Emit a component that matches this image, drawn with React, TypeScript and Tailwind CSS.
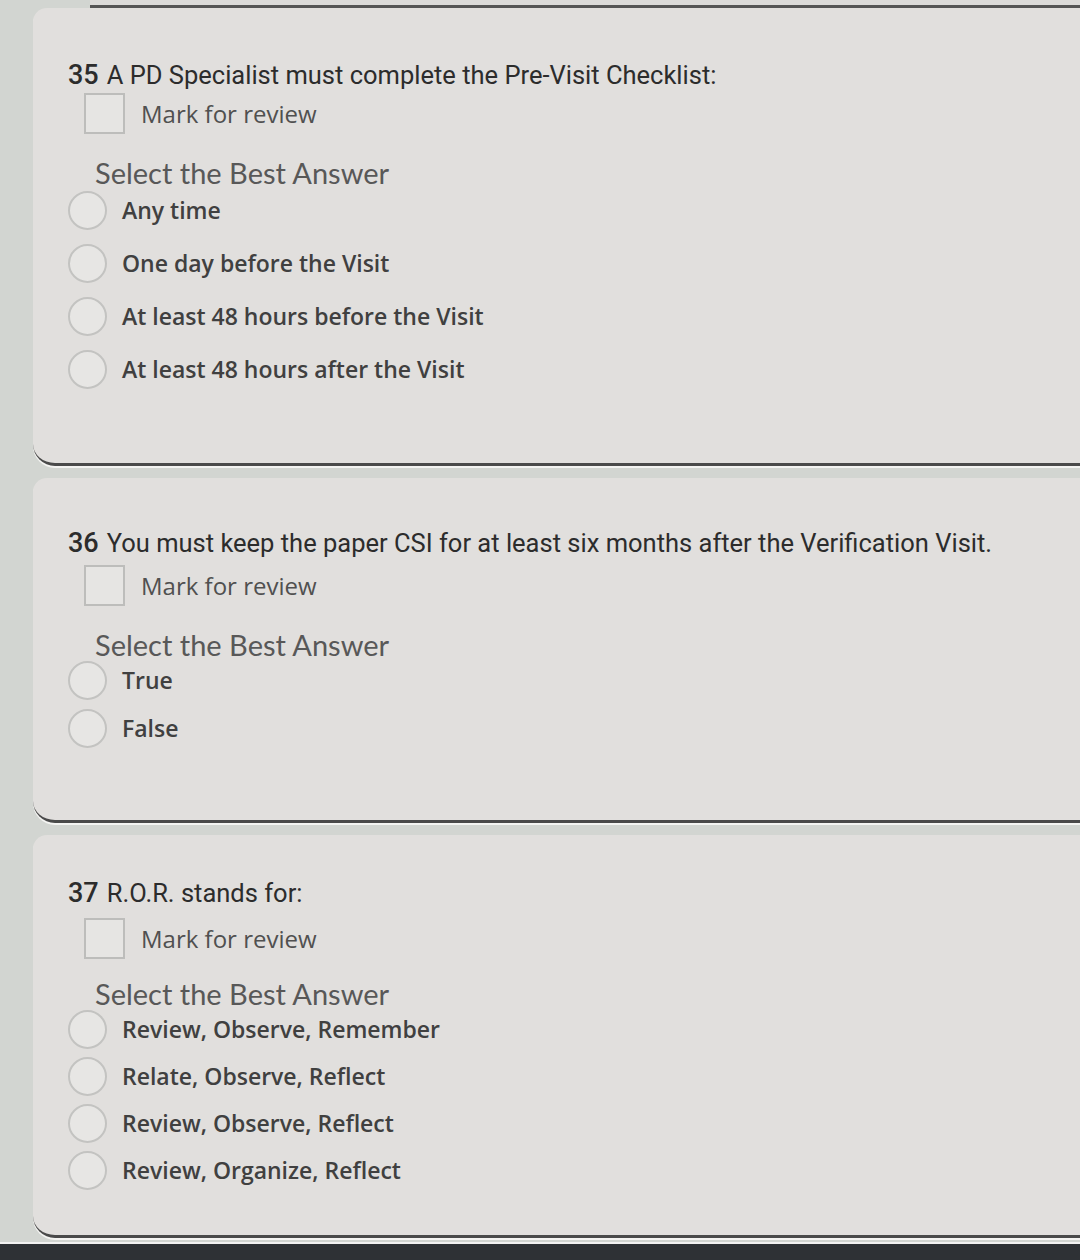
import React from "react";

type Q = {
  num: string;
  text: string;
  options: string[];
  pt: string;
  pb: string;
  cbMt: string;
  selMt: string;
  gap: string;
  optMt: string;
};

const questions: Q[] = [
  {
    num: "35",
    text: "A PD Specialist must complete the Pre-Visit Checklist:",
    options: [
      "Any time",
      "One day before the Visit",
      "At least 48 hours before the Visit",
      "At least 48 hours after the Visit",
    ],
    pt: "pt-[51px]",
    pb: "pb-[74px]",
    cbMt: "mt-[2px]",
    selMt: "mt-[24px]",
    gap: "gap-[13px]",
    optMt: "mt-[2px]",
  },
  {
    num: "36",
    text: "You must keep the paper CSI for at least six months after the Verification Visit.",
    options: ["True", "False"],
    pt: "pt-[49px]",
    pb: "pb-[72px]",
    cbMt: "mt-[6px]",
    selMt: "mt-[24px]",
    gap: "gap-[8px]",
    optMt: "mt-0",
  },
  {
    num: "37",
    text: "R.O.R. stands for:",
    options: [
      "Review, Observe, Remember",
      "Relate, Observe, Reflect",
      "Review, Observe, Reflect",
      "Review, Organize, Reflect",
    ],
    pt: "pt-[42px]",
    pb: "pb-[45px]",
    cbMt: "mt-[9px]",
    selMt: "mt-[20px]",
    gap: "gap-[7px]",
    optMt: "mt-0",
  },
];

function Card({ q, first }: { q: Q; first?: boolean }) {
  return (
    <div className={first ? "" : "mt-[12px]"}>
      <div
        className={`ml-[33px] bg-[#e1dfdd] rounded-bl-[22px] rounded-tl-[14px] border-b-[3px] border-[#4a4a4a] shadow-[0_2px_0_#f4f4f2] ${q.pt} ${q.pb} flex flex-col`}
      >
        <div className="pl-[35px] h-[32px] flex items-center text-[#2c2c2c] font-['Roboto',sans-serif] whitespace-nowrap">
          <span className="text-[27px] font-medium mr-[8px]">{q.num}</span>
          <span className="text-[25.5px]">{q.text}</span>
        </div>
        <div className={`pl-[51px] flex items-center ${q.cbMt}`}>
          <div className="w-[41px] h-[41px] border-2 border-[#bdbdbb] bg-[#e6e5e3]" />
          <span className="ml-[16px] text-[24px] text-[#505050] font-['Open_Sans',sans-serif]">
            Mark for review
          </span>
        </div>
        <div
          className={`pl-[62px] h-[30px] flex items-center text-[29px] text-[#585858] font-['Lato',sans-serif] ${q.selMt}`}
        >
          Select the Best Answer
        </div>
        <div className={`flex flex-col ${q.gap} ${q.optMt}`}>
          {q.options.map((o) => (
            <div key={o} className="pl-[35px] h-[40px] flex items-center">
              <div className="w-[39px] h-[39px] rounded-full border-2 border-[#c3c3c1] bg-[#e7e6e4]" />
              <span className="ml-[15px] text-[23px] font-semibold text-[#404040] font-['Open_Sans',sans-serif] whitespace-nowrap">
                {o}
              </span>
            </div>
          ))}
        </div>
      </div>
    </div>
  );
}

export default function App() {
  return (
    <div className="w-[1080px] h-[1260px] bg-[#d2d5d1] overflow-hidden flex flex-col">
      <div className="ml-[90px] h-[8px] border-b-[3px] border-[#555] bg-[#dcdbd9]" />
      {questions.map((q, i) => (
        <Card key={q.num} q={q} first={i === 0} />
      ))}
      <div className="mt-[4px] flex-1 bg-[#2e3135] border-t-2 border-[#f2f2f2]" />
    </div>
  );
}
